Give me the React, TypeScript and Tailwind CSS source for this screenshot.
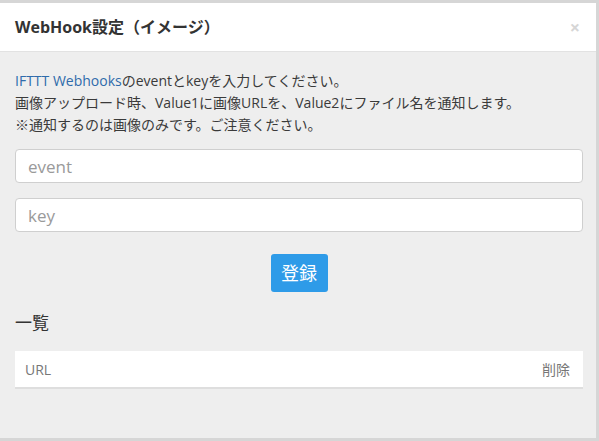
import React, { useState } from "react";

const font = {
  fontFamily: '"Open Sans", "Noto Sans CJK JP", sans-serif',
};

export default function App() {
  const [event, setEvent] = useState("");
  const [key, setKey] = useState("");

  return (
    <div
      className="w-[599px] h-[441px] bg-white overflow-hidden"
      style={font}
    >
      <div className="flex flex-col h-full border-t-[3px] border-r-[3px] border-b-[3px] border-[#d6d6d6] bg-[#eeeeee]">
        {/* Header */}
        <div className="flex items-center justify-between h-[49px] bg-white border-b border-[#e2e2e2] pl-[15px] pr-[16px]">
          <h1 className="text-[16px] font-bold text-[#333]">
            WebHook設定（イメージ）
          </h1>
          <button className="text-[18px] leading-none font-bold text-[#d6d6d6]">
            ×
          </button>
        </div>

        {/* Body */}
        <div className="flex flex-col px-[15px] pt-[18px]">
          <p className="text-[14px] leading-[22px] text-[#3a3a3a]">
            <span className="text-[#2f6bab]">IFTTT Webhooks</span>
            のeventとkeyを入力してください。
            <br />
            画像アップロード時、Value1に画像URLを、Value2にファイル名を通知します。
            <br />
            ※通知するのは画像のみです。ご注意ください。
          </p>

          <input
            value={event}
            onChange={(e) => setEvent(e.target.value)}
            placeholder="event"
            className="mt-[13px] h-[34px] w-[568px] rounded-[4px] border border-[#cfcfcf] bg-white px-[12px] text-[17px] text-[#333] placeholder:text-[#9a9a9a] outline-none"
          />
          <input
            value={key}
            onChange={(e) => setKey(e.target.value)}
            placeholder="key"
            className="mt-[15px] h-[34px] w-[568px] rounded-[4px] border border-[#cfcfcf] bg-white px-[12px] text-[17px] text-[#333] placeholder:text-[#9a9a9a] outline-none"
          />

          <div className="flex justify-center mt-[22px] w-[568px]">
            <button className="h-[38px] w-[57px] rounded-[3px] bg-[#2e9be8] text-[18px] text-white">
              登録
            </button>
          </div>

          <h2 className="mt-[20px] text-[17px] leading-[22px] text-[#333]">
            一覧
          </h2>

          <div className="mt-[17px] flex items-center justify-between h-[38px] w-[568px] bg-white border-b-2 border-[#dedede] pl-[10px] pr-[13px] text-[14px] text-[#777]">
            <span>URL</span>
            <span>削除</span>
          </div>
        </div>
      </div>
    </div>
  );
}
